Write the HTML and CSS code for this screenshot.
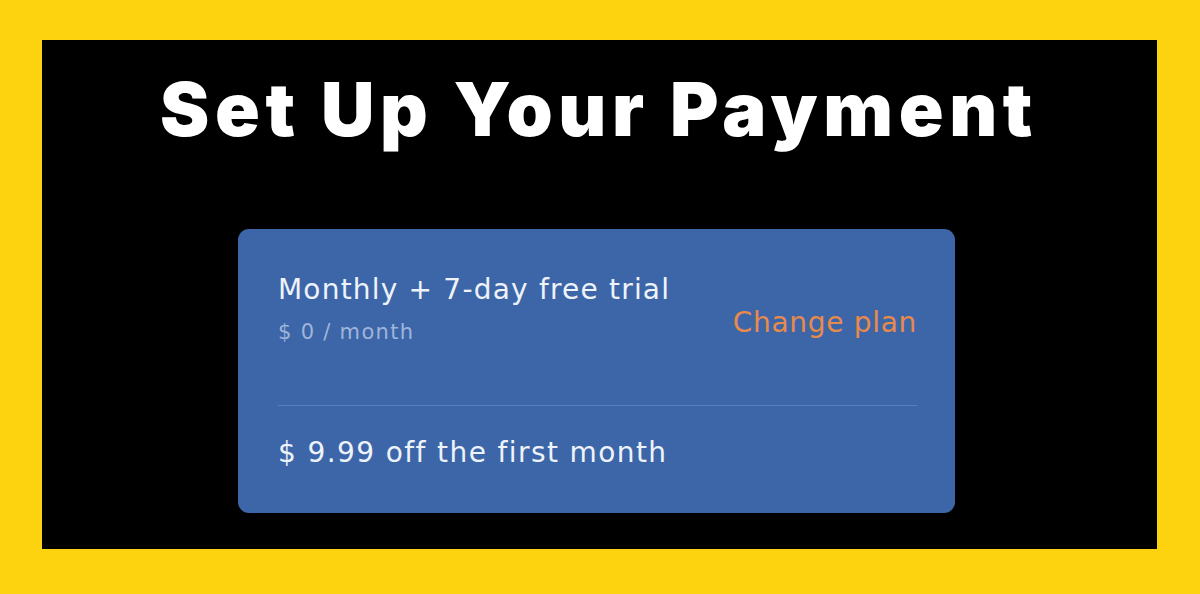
FILE: index.html
```html
<!DOCTYPE html>
<html lang="en">
<head>
<meta charset="utf-8">
<title>Set Up Your Payment</title>
<link rel="stylesheet" href="styles.css">
</head>
<body>
<div class="frame">
  <main class="stage">
    <h1 class="title">Set Up Your Payment</h1>
    <section class="card">
      <div class="plan">
        <div class="plan-info">
          <div class="plan-name">Monthly + 7-day free trial</div>
          <div class="plan-price">$ 0 / month</div>
        </div>
        <a class="change-link">Change plan</a>
      </div>
      <hr class="divider">
      <div class="offer">$ 9.99 off the first month</div>
    </section>
  </main>
</div>
</body>
</html>
```

FILE: styles.css
```css
* { box-sizing: border-box; }

html, body {
  margin: 0;
  padding: 0;
  width: 1200px;
  height: 594px;
  overflow: hidden;
}

body {
  background: #fdd20e;
  font-family: "DejaVu Sans", "Inter", sans-serif;
}

.frame {
  padding: 40px 43px 45px 42px;
  height: 594px;
}

.stage {
  background: #000;
  height: 509px;
  display: flex;
  flex-direction: column;
  align-items: center;
  padding-right: 6px;
}

.title {
  margin: 33px 0 0;
  padding-left: 5px;
  font-family: "Inter", sans-serif;
  font-weight: 900;
  font-size: 74px;
  line-height: 73px;
  color: #fff;
  letter-spacing: 5.6px;
}

.card {
  margin-top: 83px;
  width: 717px;
  height: 284px;
  background: #3d66a8;
  border-radius: 11px;
  display: flex;
  flex-direction: column;
}

.plan {
  display: flex;
  justify-content: space-between;
  align-items: flex-start;
  padding: 44px 39px 0 40px;
  height: 176px;
}

.plan-name {
  font-size: 28px;
  line-height: 34px;
  letter-spacing: 1.2px;
  color: #eef3fa;
  font-weight: 400;
}

.plan-price {
  margin-top: 11px;
  font-size: 21px;
  line-height: 28px;
  letter-spacing: 1.3px;
  color: #9fb5da;
}

.change-link {
  margin-top: 33px;
  margin-right: -1px;
  font-size: 28px;
  line-height: 34px;
  letter-spacing: 0.7px;
  color: #e78a4c;
}

.divider {
  margin: 0 38px 0 40px;
  border: 0;
  height: 1px;
  background: #5a7fba;
}

.offer {
  padding: 30px 40px 0;
  font-size: 28px;
  line-height: 34px;
  letter-spacing: 1.4px;
  color: #eef3fa;
}
```
